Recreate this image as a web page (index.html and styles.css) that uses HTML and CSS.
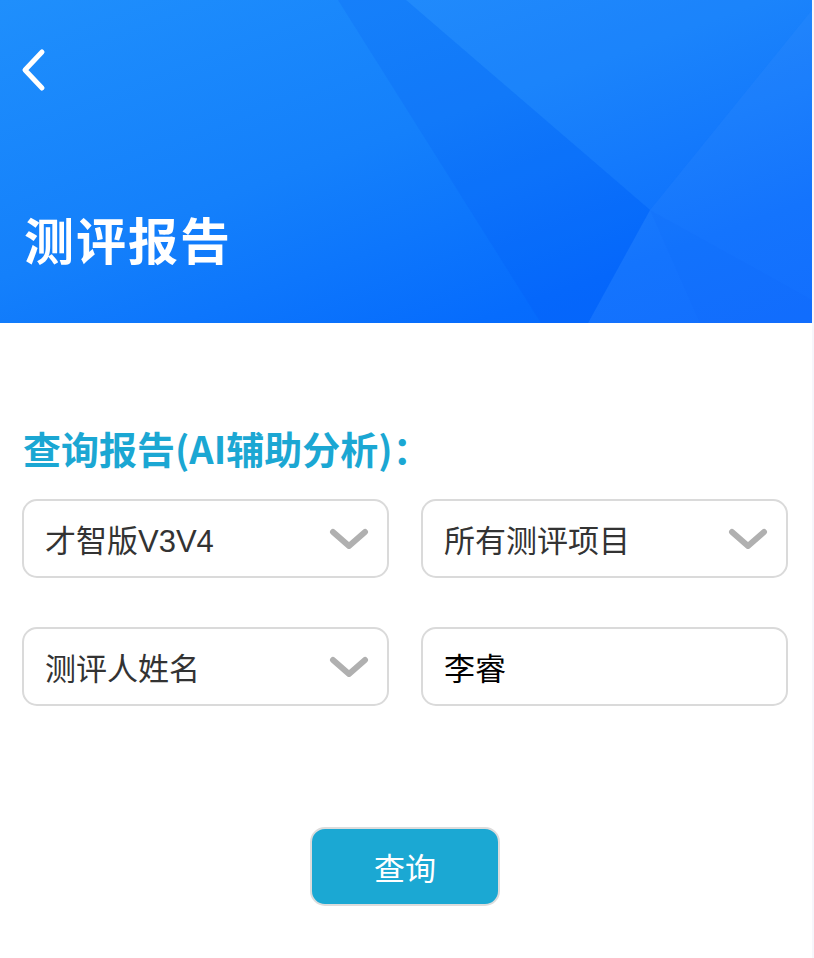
FILE: index.html
```html
<!DOCTYPE html>
<html lang="zh-CN">
<head>
    <meta charset="UTF-8">
    <meta name="viewport" content="width=device-width, initial-scale=1.0">
    <title>测评报告</title>
    <link rel="stylesheet" href="styles.css">
</head>
<body>
    <div class="page">
        <!-- Header banner -->
        <header class="banner">
            <svg class="banner-art" width="812" height="323" viewBox="0 0 812 323" aria-hidden="true">
                <polygon points="338,0 406,0 650,210 588,323 541,323" fill="#0050f0" fill-opacity="0.14"/>
                <polygon points="406,0 812,0 812,10 650,210" fill="#ffffff" fill-opacity="0.03"/>
                <polygon points="812,10 812,323 588,323 650,210" fill="#ffffff" fill-opacity="0.06"/>
                <polygon points="650,210 812,300 812,323 700,323" fill="#0050f0" fill-opacity="0.05"/>
            </svg>
            <a class="back" href="#">
                <svg width="30" height="44" viewBox="0 0 30 44">
                    <polyline points="22,4 5,22 22,40" fill="none" stroke="#fff" stroke-width="5" stroke-linecap="round" stroke-linejoin="round"/>
                </svg>
            </a>
            <h1 class="banner-title">测评报告</h1>
        </header>

        <!-- Query form -->
        <main class="query">
            <h2 class="query-title">查询报告(AI辅助分析)：</h2>
            <div class="field-grid">
                <div class="field select">
                    <span>才智版V3V4</span>
                    <svg class="arrow" width="40" height="22" viewBox="0 0 40 22"><polyline points="4,4 20,18 36,4" fill="none" stroke="#b0b0b0" stroke-width="6" stroke-linecap="round" stroke-linejoin="round"/></svg>
                </div>
                <div class="field select">
                    <span>所有测评项目</span>
                    <svg class="arrow" width="40" height="22" viewBox="0 0 40 22"><polyline points="4,4 20,18 36,4" fill="none" stroke="#b0b0b0" stroke-width="6" stroke-linecap="round" stroke-linejoin="round"/></svg>
                </div>
                <div class="field select">
                    <span>测评人姓名</span>
                    <svg class="arrow" width="40" height="22" viewBox="0 0 40 22"><polyline points="4,4 20,18 36,4" fill="none" stroke="#b0b0b0" stroke-width="6" stroke-linecap="round" stroke-linejoin="round"/></svg>
                </div>
                <div class="field input">
                    <span>李睿</span>
                </div>
            </div>
            <div class="actions">
                <button class="btn-query" type="button">查询</button>
            </div>
        </main>
    </div>
</body>
</html>
```

FILE: styles.css
```css
* {
    box-sizing: border-box;
}

body, h1, h2, button {
    margin: 0;
    padding: 0;
}

body {
    font-family: "Liberation Sans", "Noto Sans CJK SC", sans-serif;
    background: #f6f6fb;
    min-height: 958px;
}

.page {
    width: 812px;
    min-height: 958px;
    background: #fff;
}

/* Banner */
.banner {
    position: relative;
    height: 323px;
    overflow: hidden;
    background: linear-gradient(160deg, #1f8ffc 0%, #1480fb 45%, #066cfd 80%, #0466fe 100%);
    padding: 30px 0 0 20px;
    display: flex;
    flex-direction: column;
}

.banner-art {
    position: absolute;
    top: 0;
    left: 0;
}

.back {
    position: relative;
    display: block;
    width: 30px;
    height: 44px;
    margin-top: 18px;
}

.back svg {
    display: block;
}

.banner-title {
    position: relative;
    margin-top: 116px;
    margin-left: 4px;
    font-family: "Noto Sans CJK SC", sans-serif;
    font-size: 50px;
    font-weight: 700;
    line-height: 60px;
    color: #fff;
    letter-spacing: 2px;
}

/* Query section */
.query {
    padding: 100px 24px 0 22px;
}

.query-title {
    font-family: "Noto Sans CJK SC", sans-serif;
    font-size: 38px;
    font-weight: 700;
    line-height: 50px;
    color: #1ba7d3;
    margin-left: 1px;
}

.field-grid {
    margin-top: 26px;
    display: grid;
    grid-template-columns: 367px 367px;
    column-gap: 32px;
    row-gap: 49px;
}

.field {
    height: 79px;
    border: 2px solid #dadada;
    border-radius: 15px;
    display: flex;
    align-items: center;
    justify-content: space-between;
    padding: 0 18px 0 21px;
    font-size: 31px;
    color: #333;
}

.field.input {
    color: #000;
}

.arrow {
    display: block;
}

.actions {
    margin-top: 121px;
    display: flex;
    justify-content: center;
}

.btn-query {
    width: 190px;
    height: 79px;
    background: #1ba8d3;
    border: 2px solid #dcdcdc;
    border-radius: 15px;
    color: #fff;
    font-family: "Liberation Sans", "Noto Sans CJK SC", sans-serif;
    font-size: 31px;
    cursor: pointer;
}
```
